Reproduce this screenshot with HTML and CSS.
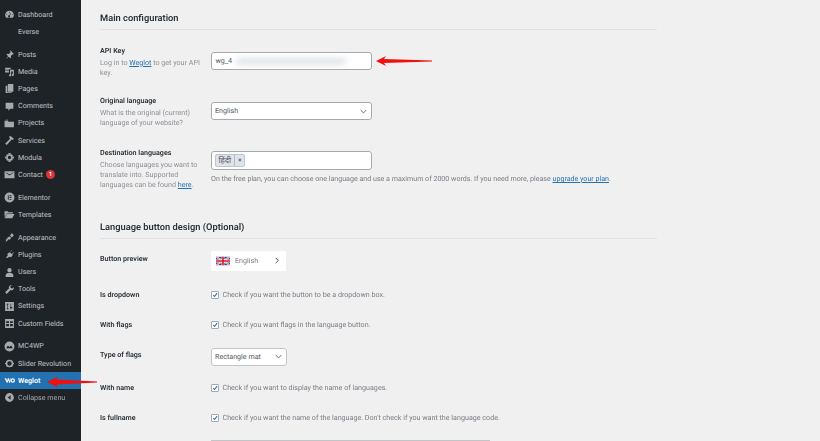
FILE: index.html
```html
<!DOCTYPE html>
<html lang="en">
<head>
<meta charset="utf-8">
<title>Weglot settings</title>
<link rel="stylesheet" href="styles.css">
</head>
<body>
<div class="app">
  <nav class="side">
    <div class="group">
      <a class="item"><svg class="ic" viewBox="0 0 20 20"><path d="M10 3a8 8 0 0 0-8 8c0 2 .7 3.800 2 5h12c1.300-1.200 2-3 2-5a8 8 0 0 0-8-8zm0 2.500 1 1-1 1-1-1zM5 9l1 1-1 1-1-1zm10 0 1 1-1 1-1-1zm-3.500-1.500 1 .6-2 4a1.800 1.800 0 1 1-1-.5z"/></svg><span>Dashboard</span></a>
      <a class="item"><span class="noicon">Everse</span></a>
    </div>
    <div class="group">
      <a class="item"><svg class="ic" viewBox="0 0 20 20"><path d="M11 2l7 7-1.500 1-1-.5-3 3 .5 3-1.500 1.500-3-3-5.500 4.500 4.500-5.500-3-3L6 8.500l3 .5 3-3-.5-1z"/></svg><span>Posts</span></a>
      <a class="item"><svg class="ic" viewBox="0 0 20 20"><path d="M2 3h10v3h-3v1H2zm0 5h7v4H2zm9-1h7v9.500a2 2 0 1 1-2-2V10h-3v7a2 2 0 1 1-2-2z"/></svg><span>Media</span></a>
      <a class="item"><svg class="ic" viewBox="0 0 20 20"><path d="M7 2h10v14H7zM3 5h3v12h8v1H3z"/></svg><span>Pages</span></a>
      <a class="item"><svg class="ic" viewBox="0 0 20 20"><path d="M3 3h14v11h-6l-3 4v-4H3z"/></svg><span>Comments</span></a>
      <a class="item"><svg class="ic" viewBox="0 0 20 20"><path d="M1 5h6l1 2h10v10H1zM3 3h4l1 1H3z"/></svg><span>Projects</span></a>
      <a class="item"><svg class="ic" viewBox="0 0 20 20"><path d="M9 3l3-1 6 5-2 2-2-1-9 10-3-2 9-9z"/></svg><span>Services</span></a>
      <a class="item"><svg class="ic" viewBox="0 0 20 20"><path fill-rule="evenodd" d="M8 2h4v3l2-1 2 2-1 2h3v4h-3l1 2-2 2-2-1v3H8v-3l-2 1-2-2 1-2H2V8h3L4 6l2-2 2 1zm2 5a3 3 0 1 0 0 6 3 3 0 0 0 0-6z"/></svg><span>Modula</span></a>
      <a class="item"><svg class="ic" viewBox="0 0 20 20"><path fill-rule="evenodd" d="M1 4h18v13H1zm2 2v1l7 5 7-5V6l-7 4z"/></svg><span>Contact</span><b class="badge">1</b></a>
    </div>
    <div class="group">
      <a class="item"><svg class="ic" viewBox="0 0 20 20"><path fill-rule="evenodd" d="M10 1a9 9 0 1 0 0 18 9 9 0 0 0 0-18zM7 6h1.500v8H7zm3 0h3.500v1.500H10zm0 3.200h3.500v1.500H10zm0 3.300h3.500V14H10z"/></svg><span>Elementor</span></a>
      <a class="item"><svg class="ic" viewBox="0 0 20 20"><path d="M1 4h6l1 2h8v2H5l-4 7zm4 5h14l-4 8H1z"/></svg><span>Templates</span></a>
    </div>
    <div class="group">
      <a class="item"><svg class="ic" viewBox="0 0 20 20"><path d="M14 2l4 4-3 3-1 1-3-3zM10 8l3 3-2 2-1 1-2-1-1 2-4 3 1-5 3-2-1-1z"/></svg><span>Appearance</span></a>
      <a class="item"><svg class="ic" viewBox="0 0 20 20"><path d="M13 2l1 1-3 3 3 3 3-3 1 1-3 3 1 1-3 4-3-1-3 2H3l4-4-1-3 4-3 1 1z"/></svg><span>Plugins</span></a>
      <a class="item"><svg class="ic" viewBox="0 0 20 20"><path d="M10 2a4 4 0 1 1 0 8 4 4 0 0 1 0-8zM3 18v-3c0-3 3-4 7-4s7 1 7 4v3z"/></svg><span>Users</span></a>
      <a class="item"><svg class="ic" viewBox="0 0 20 20"><path d="M14 2a4.500 4.500 0 0 0-5 6l-7 7 3 3 7-7a4.500 4.500 0 0 0 6-5l-3 2-3-1-.5-2.500z"/></svg><span>Tools</span></a>
      <a class="item"><svg class="ic" viewBox="0 0 20 20"><path fill-rule="evenodd" d="M2 2h16v16H2zm3 3v2h1v6H5v2h3v-2H7V7h1V5zm7 0v6h-1v2h1v2h1v-2h2v-2h-2V5z"/></svg><span>Settings</span></a>
      <a class="item"><svg class="ic" viewBox="0 0 20 20"><path fill-rule="evenodd" d="M2 2h16v16H2zm2 4v3h5V6zm7 0v3h5V6zm-7 5v4h5v-4zm7 0v4h5v-4z"/></svg><span>Custom Fields</span></a>
    </div>
    <div class="group">
      <a class="item"><svg class="ic" viewBox="0 0 20 20"><path fill-rule="evenodd" d="M10 1a9 9 0 1 0 0 18 9 9 0 0 0 0-18zM4 13l3-5 3 3 3-3 3 5H4z"/></svg><span>MC4WP</span></a>
      <a class="item"><svg class="ic" viewBox="0 0 20 20"><path fill-rule="evenodd" d="M10 3a7 7 0 1 0 0 14 7 7 0 0 0 0-14zm0 3a4 4 0 1 1 0 8 4 4 0 0 1 0-8z"/><path d="M2 9h2v2H2zm14 0h2v2h-2z"/></svg><span>Slider Revolution</span></a>
      <a class="item current"><svg class="ic" viewBox="0 0 20 20"><path d="M1 6h3l1.500 5L7 6h2l1.500 5L12 6h1l-2 8H9.500L8 9.500 6.500 14H5z"/><path fill-rule="evenodd" d="M16 6a4 4 0 1 0 0 8 4 4 0 0 0 0-8zm0 2.200a1.800 1.800 0 1 1 0 3.600 1.800 1.800 0 0 1 0-3.600z"/></svg><span>Weglot</span></a>
      <a class="item collapse"><svg class="ic" viewBox="0 0 20 20"><path fill-rule="evenodd" d="M10 2a8 8 0 1 0 0 16 8 8 0 0 0 0-16zm2 4v8L7 10z"/></svg><span>Collapse menu</span></a>
    </div>
  </nav>

  <main class="main">
    <h2 class="title">Main configuration</h2>
    <section class="form first">
      <div class="row r-api">
        <div class="lab"><strong>API Key</strong><p>Log in to <a>Weglot</a> to get your API key.</p></div>
        <div class="fld"><div class="input"><span>wg_4</span><i class="redact"></i></div></div>
      </div>
      <div class="row r-orig">
        <div class="lab"><strong>Original language</strong><p>What is the original (current) language of your website?</p></div>
        <div class="fld"><div class="select wide"><span>English</span><svg class="chev" viewBox="0 0 10 6"><path d="M1 1l4 4 4-4"/></svg></div></div>
      </div>
      <div class="row r-dest">
        <div class="lab"><strong>Destination languages</strong><p>Choose languages you want to translate into. Supported languages can be found <a>here</a>.</p></div>
        <div class="fld">
          <div class="input tags"><span class="tag"><span class="tag-name" lang="hi">हिंदी</span><span class="tag-x">×</span></span></div>
          <p class="note">On the free plan, you can choose one language and use a maximum of 2000 words. If you need more, please <a>upgrade your plan</a>.</p>
        </div>
      </div>
    </section>

    <h2 class="title second">Language button design (Optional)</h2>
    <section class="form">
      <div class="row r-prev">
        <div class="lab"><strong>Button preview</strong></div>
        <div class="fld"><div class="preview"><svg class="flag" viewBox="0 0 60 36"><rect width="60" height="36" fill="#2b3f86"/><path d="M0 0l60 36M60 0L0 36" stroke="#fff" stroke-width="7"/><path d="M0 0l60 36M60 0L0 36" stroke="#cf1b2b" stroke-width="2.500"/><path d="M30 0v36M0 18h60" stroke="#fff" stroke-width="12"/><path d="M30 0v36M0 18h60" stroke="#cf1b2b" stroke-width="7"/></svg><span>English</span><svg class="caret" viewBox="0 0 6 10"><path d="M1 1l4 4-4 4"/></svg></div></div>
      </div>
      <div class="row r-check">
        <div class="lab"><strong>Is dropdown</strong></div>
        <div class="fld check"><span class="box"><svg viewBox="0 0 10 10"><path d="M2 5l2.200 2.500L8.500 2"/></svg></span><span>Check if you want the button to be a dropdown box.</span></div>
      </div>
      <div class="row r-check">
        <div class="lab"><strong>With flags</strong></div>
        <div class="fld check"><span class="box"><svg viewBox="0 0 10 10"><path d="M2 5l2.200 2.500L8.500 2"/></svg></span><span>Check if you want flags in the language button.</span></div>
      </div>
      <div class="row r-type">
        <div class="lab"><strong>Type of flags</strong></div>
        <div class="fld"><div class="select narrow"><span>Rectangle mat</span><svg class="chev" viewBox="0 0 10 6"><path d="M1 1l4 4 4-4"/></svg></div></div>
      </div>
      <div class="row r-check">
        <div class="lab"><strong>With name</strong></div>
        <div class="fld check"><span class="box"><svg viewBox="0 0 10 10"><path d="M2 5l2.200 2.500L8.500 2"/></svg></span><span>Check if you want to display the name of languages.</span></div>
      </div>
      <div class="row r-full">
        <div class="lab"><strong>Is fullname</strong></div>
        <div class="fld check"><span class="box"><svg viewBox="0 0 10 10"><path d="M2 5l2.200 2.500L8.500 2"/></svg></span><span>Check if you want the name of the language. Don't check if you want the language code.</span></div>
      </div>
      <div class="row r-last">
        <div class="lab"></div>
        <div class="fld"><div class="area"></div></div>
      </div>
    </section>
  </main>

  <svg class="arrow arrow-key" viewBox="0 0 56 10"><path d="M0 5L10 0 8 3l48 1.600v.8L8 7l2 3z"/></svg>
  <svg class="arrow arrow-menu" viewBox="0 0 50 12"><path d="M0 6l11-5.500L9.500 3.500 50 5.500v1L9.500 8.500 11 11.500z"/></svg>
</div>
</body>
</html>
```
FILE: styles.css
```css
* { box-sizing: border-box; }
html, body { margin: 0; height: 100%; overflow: hidden; background: #f0f0f1; }
body { font-family: Roboto, "Noto Sans", sans-serif; font-size: 7.150px; line-height: 10px; color: #50575e; text-rendering: geometricPrecision; }
p { margin: 0; }
.app { position: relative; display: flex; width: 820px; height: 441px; overflow: hidden; filter: blur(0.5px); opacity: 0.999; }

.side { flex: 0 0 81px; background: #1d2327; padding-top: 6px; color: #c3c4c7; }
.group { margin-bottom: 5.600px; }
.item { display: flex; align-items: center; height: 17.200px; padding-left: 3.500px; white-space: nowrap; }
.ic { flex: 0 0 11px; width: 11px; height: 11px; margin-right: 3.500px; fill: #a7aaad; }
.noicon { margin-left: 14.500px; }
.current { background: #2271b1; color: #fff; font-weight: 600; }
.current .ic { fill: #fff; }
.collapse { color: #a7aaad; }
.badge { display: inline-flex; align-items: center; justify-content: center; width: 9px; height: 9px; margin-left: 3px; border-radius: 50%; background: #d63638; color: #fff; font-size: 6px; font-weight: 600; }

.main { flex: 1; padding: 11px 163px 0 19px; min-width: 0; }
.title { margin: 0; height: 19px; border-bottom: 1px solid #e2e2e4; font-size: 9.300px; line-height: 16px; font-weight: 600; color: #2c3338; white-space: nowrap; }
.title.second { margin-top: 30px; }

.row { display: grid; grid-template-columns: 111px 1fr; }
.lab strong { display: block; font-weight: 600; color: #2c3338; }
.lab p { width: 100px; margin-top: 1.500px; color: #8c8f94; }
.lab a, .note a { color: #2271b1; text-decoration: underline; }
.first .r-api { padding-top: 16px; height: 66px; }
.first .r-orig { height: 51px; }
.r-api .fld { padding-top: 6px; }
.r-orig .fld { padding-top: 6px; }
.r-dest .lab { padding-top: 1px; }
.r-dest .fld { padding-top: 4px; }

.input { width: 161px; height: 18px; position: relative; display: flex; align-items: center; padding-left: 3.500px; background: #fff; border: 1px solid #a7aaad; border-radius: 3px; color: #50575e; }
.redact { position: absolute; left: 24px; top: 5px; width: 110px; height: 7px; background: #dfe3e6; border-radius: 4px; filter: blur(3px); }
.tags { height: 19px; padding-left: 2.500px; }
.tag { display: inline-flex; height: 13px; background: #dfe3ec; border: 1px solid #c3c4c7; border-radius: 2px; align-items: center; }
.tag-name { padding: 0 3px; font-family: "Noto Sans", "Noto Sans CJK SC", sans-serif; font-size: 8px; height: 11px; border-right: 1px solid #b4b9be; line-height: 12px; }
.tag-x { padding: 0 3px; font-size: 6px; font-weight: 700; }
.note { margin-top: 4px; white-space: nowrap; color: #787c82; font-size: 7.100px; }

.select { position: relative; height: 18px; display: flex; align-items: center; justify-content: space-between; padding: 0 4px 0 3px; background: #fff; border: 1px solid #a7aaad; border-radius: 3px; color: #50575e; }
.select.wide { width: 161px; }
.select.narrow { width: 76px; margin-top: -2px; border-color: #c3c4c7; }
.chev { width: 7px; height: 5px; fill: none; stroke: #50575e; stroke-width: 1.300; }

.r-prev { height: 39px; margin-top: 12px; }
.r-prev .lab { padding-top: 3px; }
.preview { display: flex; align-items: center; width: 75px; height: 20px; padding: 0 7px 0 5px; background: #fff; color: #787c82; }
.flag { width: 14px; height: 10px; margin-right: 5px; }
.preview span { flex: 1; }
.caret { width: 4px; height: 7px; fill: none; stroke: #333; stroke-width: 1.300; }

.r-check { height: 30px; }
.r-full { height: 27px; }
.check { display: flex; align-items: center; height: 10px; gap: 3.500px; white-space: nowrap; color: #787c82; }
.box { display: flex; width: 8px; height: 8px; background: #fff; border: 1px solid #a7aaad; border-radius: 1px; }
.box svg { width: 100%; height: 100%; fill: none; stroke: #2271b1; stroke-width: 1.800; }
.r-type { height: 33px; }
.r-last { height: 20px; }
.area { width: 279px; height: 20px; background: #fff; border: 1px solid #c3c4c7; }

.arrow { position: absolute; fill: #ee1111; }
.arrow-key { left: 376px; top: 56px; width: 56px; height: 10px; }
.arrow-menu { left: 47px; top: 375.500px; width: 50px; height: 12px; }
```
